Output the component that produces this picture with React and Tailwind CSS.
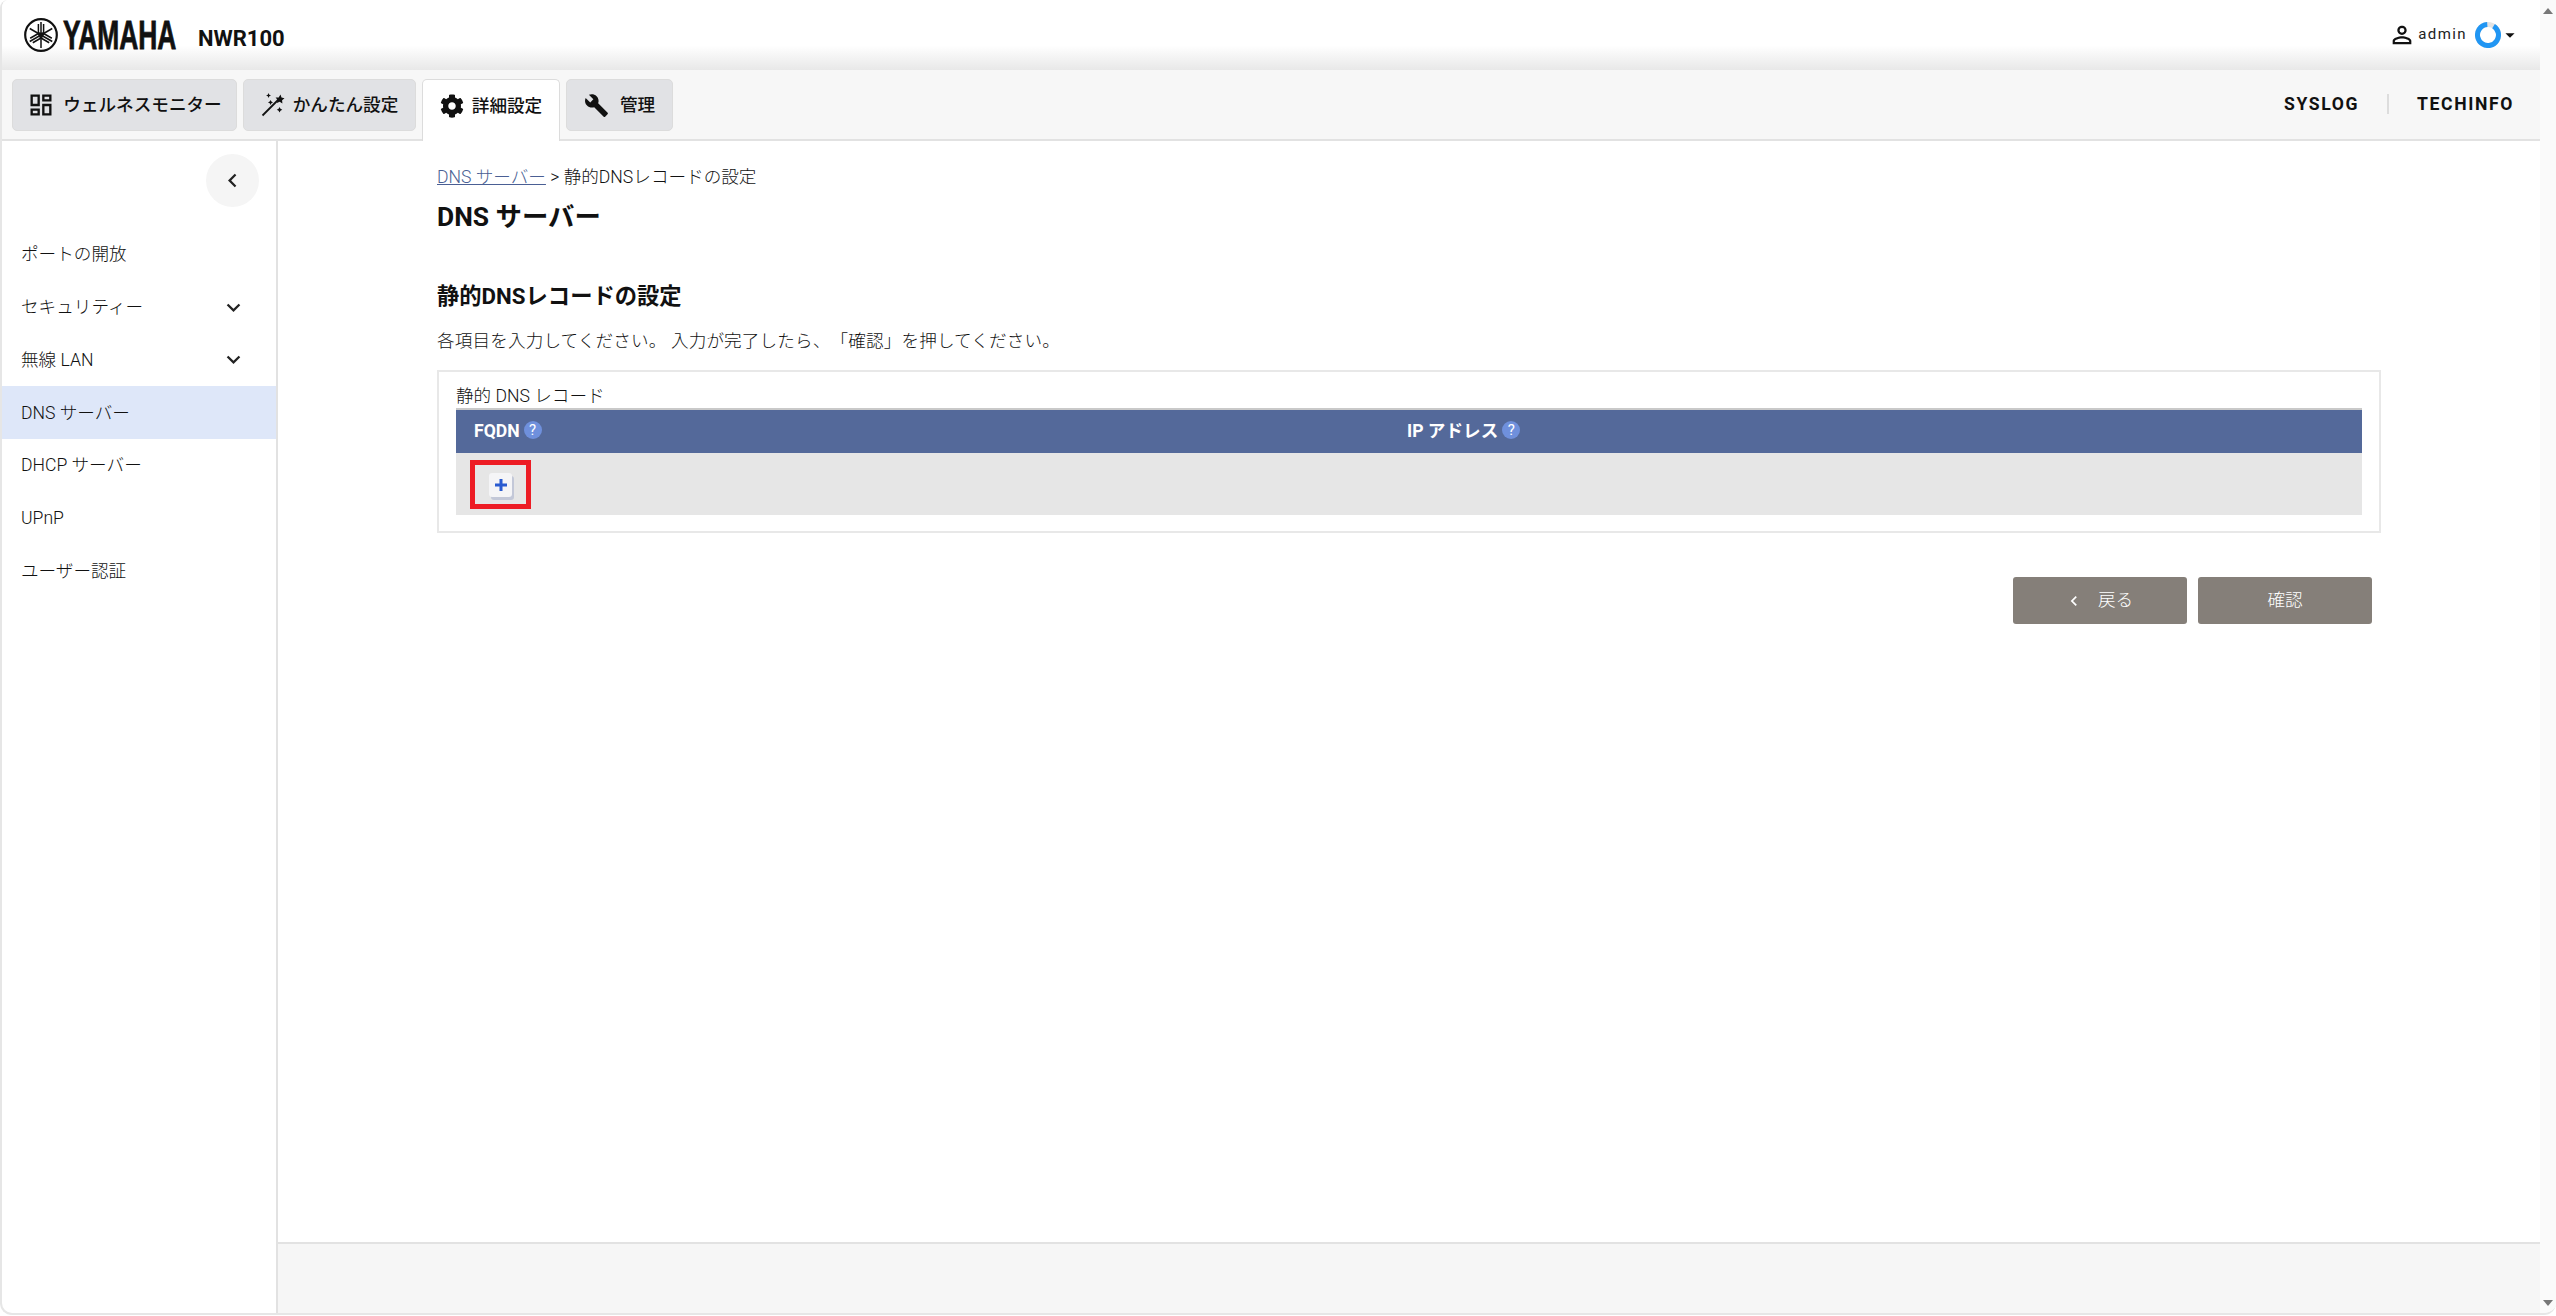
import { MdOutlineDashboard, MdBuild, MdPersonOutline, MdArrowDropDown, MdChevronLeft, MdExpandMore } from "react-icons/md";
import { FaCog } from "react-icons/fa";

const FONT = "font-['Roboto','Noto_Sans_CJK_JP',sans-serif]";

function WandIcon() {
  return (
    <svg viewBox="0 0 24 24" className="w-[24px] h-[24px] shrink-0">
      <path d="M1.5 22.5 18 6" stroke="#111" strokeWidth="1.8" fill="none" />
      <path d="m19.5 1.5 1 3 3 .8-2.4 2 .3 3.2-2.7-1.7-2.9 1.3.8-3.1-2-2.4 3.1-.2z" fill="#111" />
      <path d="m7.5 0 .8 1.7 1.7.7-1.7.8-.8 1.7-.7-1.7-1.7-.8 1.7-.7zM9.5 7l.9 1.6 1.6.9-1.6.8-.9 1.7-.8-1.7-1.7-.8 1.7-.9zM18.5 14l1 1.8 1.8 1-1.8 1-1 1.7-.9-1.7-1.8-1 1.8-1z" fill="#111" />
    </svg>
  );
}

const TABS = [
  { label: "ウェルネスモニター", icon: <MdOutlineDashboard className="text-[28px] text-[#111]" />, width: "w-[225px]" },
  { label: "かんたん設定", icon: <WandIcon />, width: "w-[173px]" },
  { label: "詳細設定", icon: <FaCog className="text-[24px] text-[#111]" />, width: "w-[138px]", active: true },
  { label: "管理", icon: <MdBuild className="text-[25px] text-[#111] mr-[3px]" />, width: "w-[107px]" },
];

const MENU = [
  { label: "ポートの開放" },
  { label: "セキュリティー", more: true },
  { label: "無線 LAN", more: true },
  { label: "DNS サーバー", active: true },
  { label: "DHCP サーバー" },
  { label: "UPnP" },
  { label: "ユーザー認証" },
];

function YamahaMark() {
  const fork = (
    <g fill="none" stroke="#111" strokeWidth="1.5">
      <path d="M17 4v26" />
      <path d="M14.4 6v9.5c0 1.4 1.1 2.2 2.6 2.2s2.6-.8 2.6-2.2V6" />
    </g>
  );
  return (
    <svg viewBox="0 0 34 34" className="w-[34px] h-[34px]">
      <circle cx="17" cy="17" r="15.8" fill="none" stroke="#111" strokeWidth="2.2" />
      <g>{fork}</g>
      <g transform="rotate(120 17 17)">{fork}</g>
      <g transform="rotate(240 17 17)">{fork}</g>
    </svg>
  );
}

function Help() {
  return (
    <span className="w-[18px] h-[18px] -mt-[3px] rounded-full bg-[#6f90dc] text-white text-[15px] leading-[18px] font-normal text-center">?</span>
  );
}

function Header() {
  return (
    <div className="h-[70px] flex items-center justify-between bg-gradient-to-b from-white from-65% to-[#e8e8e8]">
      <div className="flex items-center pl-[22px]">
        <YamahaMark />
        <div className="w-[116px] ml-[5px] h-[34px]">
          <span className="block origin-left scale-x-[0.66] font-['Liberation_Sans',sans-serif] font-bold text-[40px] leading-[34px] text-[#111] whitespace-nowrap [-webkit-text-stroke:0.8px_#111]">YAMAHA</span>
        </div>
        <span className="ml-[19px] mt-[8px] text-[22px] font-bold text-[#111] leading-none">NWR100</span>
      </div>
      <div className="flex items-center pr-[24px] pb-[1px]">
        <MdPersonOutline className="text-[28px] text-[#111] mr-[2px]" />
        <span className="text-[15px] tracking-[1.4px] text-[#222] mr-[8px]">admin</span>
        <svg viewBox="0 0 26 26" className="w-[26px] h-[26px]">
          <circle cx="13" cy="13" r="10.5" fill="none" stroke="#e3e3e3" strokeWidth="5" />
          <circle cx="13" cy="13" r="10.5" fill="none" stroke="#2196f3" strokeWidth="5" strokeDasharray="59 66" transform="rotate(-58 13 13)" />
        </svg>
        <MdArrowDropDown className="text-[22px] text-[#111] -ml-[2px] -mr-[5px]" />
      </div>
    </div>
  );
}

function TabBar() {
  return (
    <div className="h-[71px] flex justify-between bg-[#f7f7f7] border-b-2 border-[#e2e2e2] pl-[10px]">
      <div className="flex items-start gap-[6px] pt-[9px]">
        {TABS.map((t) => (
          <div
            key={t.label}
            className={`${t.width} flex items-center justify-center gap-[8px] border border-[#dcdcdc] text-[17.6px] font-medium text-[#111] ${t.active ? "h-[62px] bg-white border-b-0 rounded-t-[5px] pb-[9px] z-10 font-bold" : "h-[52px] bg-[#e1e2e5] rounded-[5px]"}`}
          >
            {t.icon}
            <span>{t.label}</span>
          </div>
        ))}
      </div>
      <div className="flex items-center pr-[26px] pb-[1px] text-[17.6px] font-bold tracking-[1.6px] text-[#111]">
        <span>SYSLOG</span>
        <span className="w-[2px] h-[20px] bg-[#dddddd] mx-[28px]" />
        <span>TECHINFO</span>
      </div>
    </div>
  );
}

function Sidebar() {
  return (
    <div className="w-[276px] shrink-0 border-r-2 border-[#e2e2e2] flex flex-col">
      <div className="h-[87px] flex justify-end pt-[13px] pr-[17px]">
        <div className="w-[53px] h-[53px] rounded-full bg-[#f5f5f5] flex items-center justify-center">
          <MdChevronLeft className="text-[27px] text-[#222]" />
        </div>
      </div>
      {MENU.map((m) => (
        <div
          key={m.label}
          className={`h-[52.8px] flex items-center justify-between pl-[19px] pr-[29px] text-[17.6px] font-light text-[#111] ${m.active ? "bg-[#dee7f9]" : ""}`}
        >
          <span>{m.label}</span>
          {m.more && <MdExpandMore className="text-[27px] text-[#222]" />}
        </div>
      ))}
    </div>
  );
}

function RecordTable() {
  return (
    <div className="border-2 border-[#e8e8e8] px-[17px] pt-[13px] pb-[16px] mt-[16px]">
      <div className="text-[17.6px] font-light leading-[23px] text-[#111]">静的 DNS レコード</div>
      <div className="h-[45px] grid grid-cols-[951px_1fr] items-center bg-[#54699a] border-t-2 border-[#c9c9c9] text-[17.6px] font-bold text-white">
        <div className="flex items-center gap-[4px] pl-[18px]">FQDN <Help /></div>
        <div className="flex items-center gap-[4px]">IP アドレス <Help /></div>
      </div>
      <div className="h-[62px] bg-[#e6e6e6] pl-[14px] pt-[7px]">
        <div className="w-[61px] h-[49px] border-[5px] border-[#ed1c24] flex items-center justify-center">
          <div className="w-[23px] h-[24px] rounded-[3px] bg-[#f5f5f7] shadow-[2px_3px_0_#c3c8d8] flex items-center justify-center">
            <svg viewBox="0 0 16 16" className="w-[16px] h-[16px]">
              <path d="M8 2v12M2 8h12" stroke="#2a5bd0" strokeWidth="3" fill="none" />
            </svg>
          </div>
        </div>
      </div>
    </div>
  );
}

function Main() {
  return (
    <div className="flex-1 flex flex-col min-w-0">
      <div className="flex-1 px-[159px] pt-[23px] text-[#111]">
        <div className="text-[17.6px] font-light leading-[26px]">
          <span className="text-[#4a5f94] underline">DNS サーバー</span> &gt; 静的DNSレコードの設定
        </div>
        <h1 className="text-[26.4px] font-bold leading-[34px] mt-[10px]">DNS サーバー</h1>
        <h2 className="text-[22.3px] font-bold leading-[30px] mt-[47px]">静的DNSレコードの設定</h2>
        <p className="text-[17.6px] font-light leading-[26px] mt-[17px] tracking-[0.14px] [text-spacing-trim:space-all]">各項目を入力してください。 入力が完了したら、「確認」を押してください。</p>
        <RecordTable />
        <div className="flex justify-end gap-[11px] pr-[9px] mt-[44px]">
          <button className="w-[174px] h-[47px] rounded-[3px] bg-[#857f79] text-white text-[17.6px] font-light flex items-center justify-center gap-[14px]">
            <MdChevronLeft className="text-[20px]" />
            <span className="mr-[3px]">戻る</span>
          </button>
          <button className="w-[174px] h-[47px] rounded-[3px] bg-[#857f79] text-white text-[17.6px] font-light">確認</button>
        </div>
      </div>
      <div className="h-[71px] bg-[#f6f6f6] border-t-2 border-[#e2e2e2]" />
    </div>
  );
}

function Scrollbar() {
  return (
    <div className="w-[16px] shrink-0 bg-[#fafafa] flex flex-col items-center justify-between pt-[8px] pb-[7px]">
      <span className="w-0 h-0 border-x-[5px] border-x-transparent border-b-[6px] border-b-[#777]" />
      <span className="w-0 h-0 border-x-[5px] border-x-transparent border-t-[6px] border-t-[#777]" />
    </div>
  );
}

export default function App() {
  return (
    <div className={`${FONT} h-[1316px] bg-white overflow-hidden`}>
      <div className="h-[1315px] flex border-l-2 border-b-2 border-[#e6e6e6] rounded-b-[12px] rounded-tl-[8px] overflow-hidden">
        <div className="flex-1 flex flex-col min-w-0">
          <Header />
          <TabBar />
          <div className="flex-1 flex min-h-0">
            <Sidebar />
            <Main />
          </div>
        </div>
        <Scrollbar />
      </div>
    </div>
  );
}
